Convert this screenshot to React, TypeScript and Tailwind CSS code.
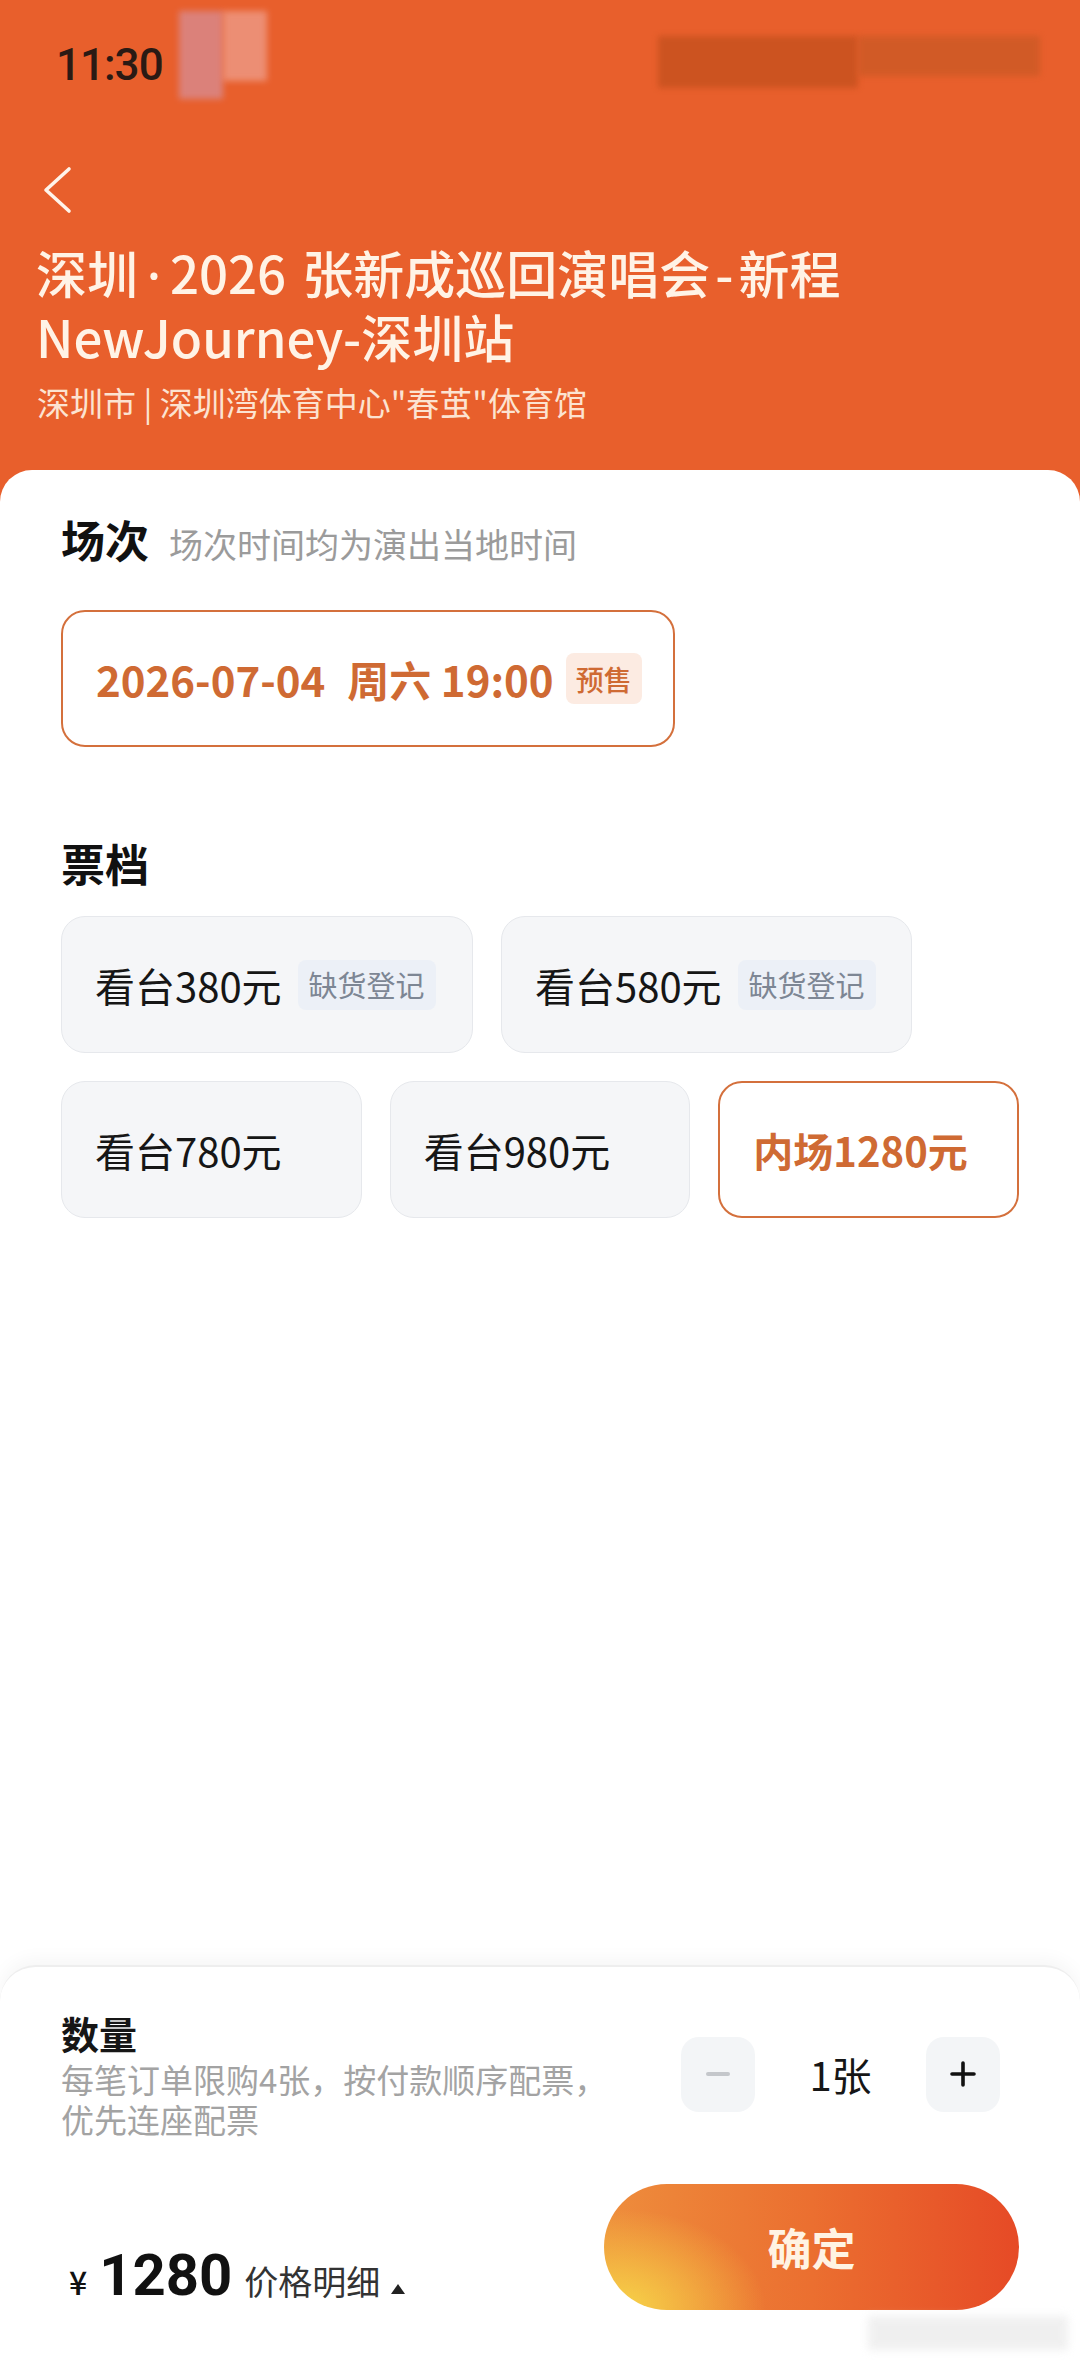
import React from "react";

function Chevron() {
  return (
    <svg width="30" height="48" viewBox="0 0 30 48" fill="none">
      <polyline
        points="26,3 3,24 26,45"
        stroke="#FFF4EA"
        strokeWidth="3.6"
        strokeLinecap="round"
        strokeLinejoin="round"
      />
    </svg>
  );
}

function TicketCard({
  label,
  tag,
  className,
}: {
  label: string;
  tag?: string;
  className: string;
}) {
  return (
    <div
      className={
        "h-[137px] rounded-[24px] bg-[#F5F6F8] border-[1.5px] border-[#E6E8EC] flex items-center px-[33px] whitespace-nowrap " +
        className
      }
    >
      <span className="text-[40px] leading-none text-[#161616]">{label}</span>
      {tag && (
        <span className="ml-[16px] h-[50px] px-[11px] rounded-[8px] bg-[#ECF0F7] text-[#7D8694] text-[29px] flex items-center">
          {tag}
        </span>
      )}
    </div>
  );
}

export default function App() {
  return (
    <div className="w-[1080px] h-[2362px] bg-[#E85F2C] flex flex-col font-['Noto_Sans_CJK_SC','Noto_Sans',sans-serif] overflow-hidden">
      {/* Header */}
      <div className="h-[470px] flex flex-col shrink-0">
        {/* status bar */}
        <div className="h-[130px] flex items-center">
          <span className="ml-[56px] font-['Roboto',sans-serif] text-[44px] font-medium tracking-[-1px] text-[#2A1A14]">
            11:30
          </span>
          <div className="ml-[16px] -mt-[20px] flex">
            <div className="w-[44px] h-[88px] bg-[#D88A8E] blur-[3px] opacity-80"></div>
            <div className="w-[44px] h-[70px] bg-[#EE9A86] blur-[3px] opacity-80"></div>
          </div>
          <div className="flex-1"></div>
          <div className="mr-[40px] -mt-[6px] flex items-start">
            <div className="w-[200px] h-[52px] bg-[#C9521F] blur-[3px] opacity-90"></div>
            <div className="w-[182px] h-[40px] bg-[#CF5A26] blur-[3px] opacity-90"></div>
          </div>
        </div>
        {/* back */}
        <div className="mt-[36px] ml-[43px] h-[48px]">
          <Chevron />
        </div>
        {/* title */}
        <div className="mt-[27px] px-[36px] text-[51px] leading-[62px] font-medium text-[#FFF3E6] whitespace-nowrap">
          深圳<span className="font-['Noto_Sans',sans-serif] mx-[9px]">·</span>2026
          <span className="ml-[16px]">张新成巡回演唱会</span>
          <span className="mx-[5px]">-</span>新程
          <br />
          NewJourney-深圳站
        </div>
        <div className="mt-[13px] px-[37px] text-[33px] leading-[44px] text-[#FCE3D1]">
          深圳市 | 深圳湾体育中心"春茧"体育馆
        </div>
      </div>

      {/* White body */}
      <div className="flex-1 bg-white rounded-t-[32px] flex flex-col">
        <div className="px-[61px] pt-[39px]">
          <div className="flex items-baseline gap-[20px]">
            <span className="text-[44px] leading-[60px] font-bold text-[#111111]">场次</span>
            <span className="text-[34px] text-[#9B9B9B]">场次时间均为演出当地时间</span>
          </div>

          <div className="mt-[41px] w-[614px] h-[137px] rounded-[24px] border-[2.5px] border-[#D4703C] flex items-center px-[33px] whitespace-nowrap">
            <span className="text-[42px] font-bold text-[#CF6A33] leading-none">2026-07-04</span>
            <span className="ml-[22px] text-[42px] font-bold text-[#CF6A33] leading-none">周六 19:00</span>
            <span className="ml-[12px] h-[51px] px-[10px] rounded-[8px] bg-[#FCEBE2] text-[#CF6A33] text-[28px] font-medium flex items-center">
              预售
            </span>
          </div>

          <div className="mt-[86px] text-[44px] leading-[60px] font-bold text-[#111111]">票档</div>

          <div className="mt-[23px] flex gap-[28px]">
            <TicketCard label="看台380元" tag="缺货登记" className="w-[412px]" />
            <TicketCard label="看台580元" tag="缺货登记" className="w-[411px]" />
          </div>
          <div className="mt-[28px] grid grid-cols-3 gap-[28px]">
            <TicketCard label="看台780元" className="" />
            <TicketCard label="看台980元" className="" />
            <div className="h-[137px] rounded-[24px] bg-white border-[2.5px] border-[#D4703C] flex items-center px-[33px] whitespace-nowrap">
              <span className="text-[40px] leading-none font-bold text-[#CF6A33]">内场1280元</span>
            </div>
          </div>
        </div>

        <div className="flex-1"></div>

        {/* Bottom panel */}
        <div className="relative h-[397px] rounded-t-[36px] border-t-[2px] border-[#EEEEEE] shadow-[0_-6px_18px_rgba(0,0,0,0.04)] bg-white px-[61px] pt-[42px] flex flex-col">
          <div className="flex items-center justify-between">
            <div className="flex flex-col">
              <span className="text-[38px] leading-[48px] font-bold text-[#161616]">数量</span>
              <span className="mt-[2px] text-[33px] leading-[40px] text-[#A3A3A3]">
                每笔订单限购4张，按付款顺序配票，
                <br />
                优先连座配票
              </span>
            </div>
            <div className="mr-[19px] flex items-center">
              <div className="w-[74px] h-[75px] rounded-[18px] bg-[#F3F5F7] flex items-center justify-center">
                <div className="w-[24px] h-[4px] rounded-full bg-[#C4C7CB]"></div>
              </div>
              <div className="w-[171px] text-center text-[40px] text-[#161616]">1张</div>
              <div className="w-[74px] h-[75px] rounded-[18px] bg-[#F3F5F7] flex items-center justify-center">
                <svg width="26" height="26" viewBox="0 0 26 26">
                  <path d="M13 2v22M2 13h22" stroke="#111" strokeWidth="3.6" strokeLinecap="round" />
                </svg>
              </div>
            </div>
          </div>

          <div className="mt-[45px] flex items-end justify-between">
            <div className="flex items-baseline mb-[4px]">
              <span className="ml-[8px] text-[32px] font-medium text-[#111]">¥</span>
              <span className="ml-[12px] font-['Roboto',sans-serif] text-[58px] leading-none font-bold text-[#111]">
                1280
              </span>
              <span className="ml-[12px] text-[34px] text-[#333333]">价格明细</span>
              <svg className="ml-[10px] mb-[6px]" width="16" height="12" viewBox="0 0 16 12">
                <path d="M8 1L15 11H1Z" fill="#222" />
              </svg>
            </div>
            <div className="w-[415px] h-[126px] rounded-full flex items-center justify-center bg-[radial-gradient(ellipse_35%_80%_at_4%_100%,rgba(247,212,72,1),rgba(247,212,72,0)),linear-gradient(90deg,#EE8D3C_0%,#EB6F30_50%,#E64A26_100%)]">
              <span className="text-[44px] font-bold text-[#FFF3E3]">确定</span>
            </div>
          </div>

          <div className="absolute right-[12px] bottom-[12px] w-[200px] h-[34px] bg-[#E6E6E6] blur-[4px] opacity-60"></div>
        </div>
      </div>
    </div>
  );
}
